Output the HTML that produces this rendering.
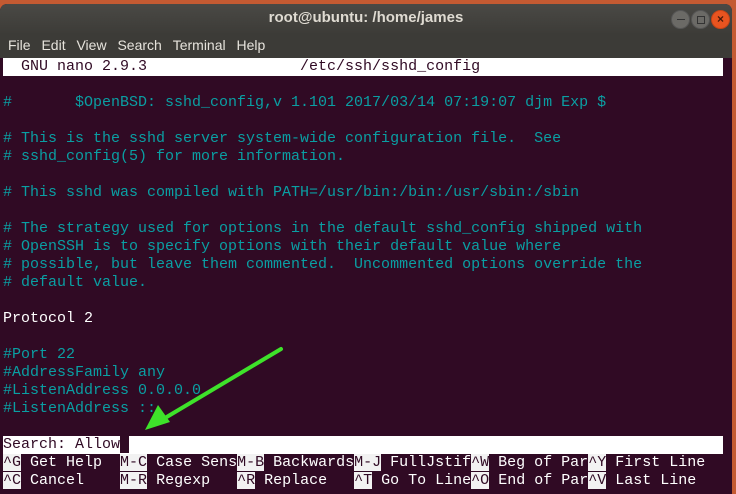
<!DOCTYPE html>
<html><head><style>
html,body{margin:0;padding:0;width:736px;height:488px;overflow:hidden;background:#c45a32;}
.win{position:absolute;left:0;top:4px;width:732px;height:490px;background:#300a24;border-radius:7px 7px 0 0;overflow:hidden;}
.title{position:absolute;left:0;top:0;width:732px;height:29px;background:linear-gradient(#4a4945,#3d3c38);color:#dfdbd2;font:bold 15px "Liberation Sans",sans-serif;text-align:center;line-height:27px;}
.menu{position:absolute;left:0;top:29px;width:732px;height:25px;background:#3c3b37;color:#e6e3dc;font:14px "Liberation Sans",sans-serif;line-height:25px;}
.menu span{margin-left:8px;margin-right:-1px}
.btn{position:absolute;top:6px;width:17px;height:17px;border-radius:50%;background:#6b6a66;border:1px solid #555;}
.term{position:absolute;left:3px;top:54px;font:15px/18px "Liberation Mono",monospace;color:#0a9fa3;}
.row{height:18px;white-space:pre;}
.w{color:#fff}
.hdr{background:#fff;color:#300a24;width:720px;}
.k{background:#f2f2f2;color:#300a24}
.l{color:#fff}
</style></head><body>
<div class="win">
<div class="title">root@ubuntu: /home/james</div>
<div class="btn" style="left:671px"><div style="position:absolute;left:5px;top:8px;width:8px;height:1px;background:#333"></div></div>
<div class="btn" style="left:691px"><div style="position:absolute;left:5px;top:5px;width:6px;height:6px;border:1px solid #333"></div></div>
<div class="btn" style="left:711px;background:#e95420;border-color:#c74417;color:#4a1a0a;font:bold 12px/17px 'Liberation Sans',sans-serif;text-align:center">×</div>
<div class="menu"><span>File</span> <span>Edit</span> <span>View</span> <span>Search</span> <span>Terminal</span> <span>Help</span></div>
<div class="term"><div class="row hdr">  GNU nano 2.9.3                 /etc/ssh/sshd_config</div><div class="row"> </div><div class="row">#       $OpenBSD: sshd_config,v 1.101 2017/03/14 07:19:07 djm Exp $</div><div class="row"> </div><div class="row"># This is the sshd server system-wide configuration file.  See</div><div class="row"># sshd_config(5) for more information.</div><div class="row"> </div><div class="row"># This sshd was compiled with PATH=/usr/bin:/bin:/usr/sbin:/sbin</div><div class="row"> </div><div class="row"># The strategy used for options in the default sshd_config shipped with</div><div class="row"># OpenSSH is to specify options with their default value where</div><div class="row"># possible, but leave them commented.  Uncommented options override the</div><div class="row"># default value.</div><div class="row"> </div><div class="row w">Protocol 2</div><div class="row"> </div><div class="row">#Port 22</div><div class="row">#AddressFamily any</div><div class="row">#ListenAddress 0.0.0.0</div><div class="row">#ListenAddress ::</div><div class="row"> </div><div class="row hdr">Search: Allow<span style="background:#300a24"> </span></div><div class="row"><span class="k">^G</span><span class="l"> Get Help  </span><span class="k">M-C</span><span class="l"> Case Sens</span><span class="k">M-B</span><span class="l"> Backwards</span><span class="k">M-J</span><span class="l"> FullJstif</span><span class="k">^W</span><span class="l"> Beg of Par</span><span class="k">^Y</span><span class="l"> First Line</span></div><div class="row"><span class="k">^C</span><span class="l"> Cancel    </span><span class="k">M-R</span><span class="l"> Regexp   </span><span class="k">^R</span><span class="l"> Replace   </span><span class="k">^T</span><span class="l"> Go To Line</span><span class="k">^O</span><span class="l"> End of Par</span><span class="k">^V</span><span class="l"> Last Line</span></div></div>
</div>
<svg style="position:absolute;left:0;top:0" width="736" height="488">
<line x1="281" y1="349" x2="165" y2="418" stroke="#3ee22a" stroke-width="4" stroke-linecap="round"/>
<polygon points="145,430 158,405 170,422" fill="#3ee22a"/>
</svg>
</body></html>
